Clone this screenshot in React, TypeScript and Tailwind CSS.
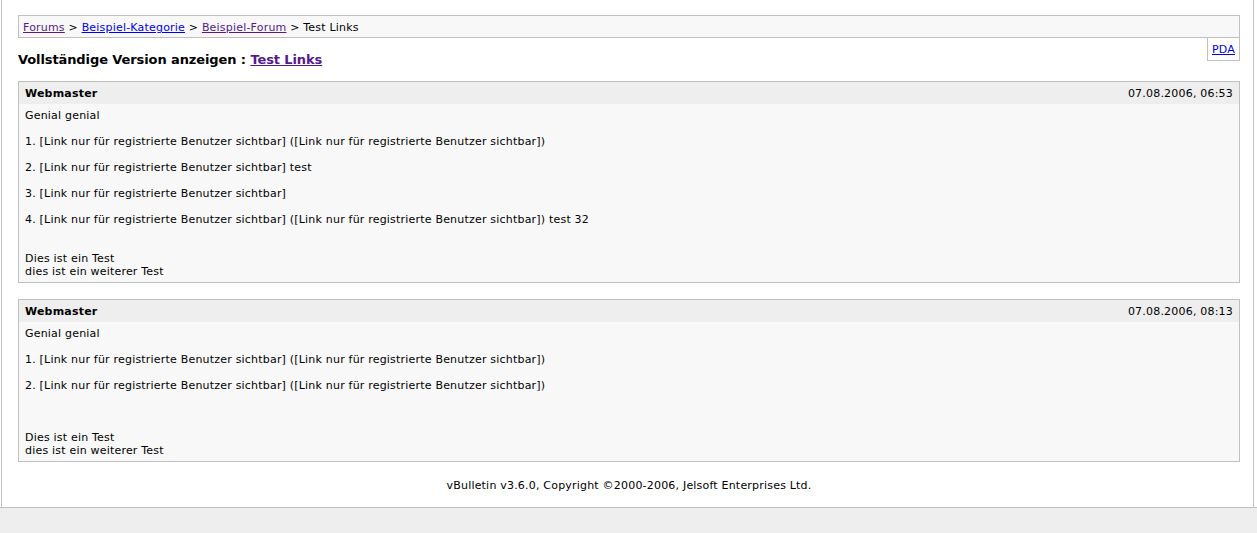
import React from "react";

interface Post {
  author: string;
  date: string;
  lines: string[];
}

const posts: Post[] = [
  {
    author: "Webmaster",
    date: "07.08.2006, 06:53",
    lines: [
      "Genial genial",
      "",
      "1. [Link nur für registrierte Benutzer sichtbar] ([Link nur für registrierte Benutzer sichtbar])",
      "",
      "2. [Link nur für registrierte Benutzer sichtbar] test",
      "",
      "3. [Link nur für registrierte Benutzer sichtbar]",
      "",
      "4. [Link nur für registrierte Benutzer sichtbar] ([Link nur für registrierte Benutzer sichtbar]) test 32",
      "",
      "",
      "Dies ist ein Test",
      "dies ist ein weiterer Test",
    ],
  },
  {
    author: "Webmaster",
    date: "07.08.2006, 08:13",
    lines: [
      "Genial genial",
      "",
      "1. [Link nur für registrierte Benutzer sichtbar] ([Link nur für registrierte Benutzer sichtbar])",
      "",
      "2. [Link nur für registrierte Benutzer sichtbar] ([Link nur für registrierte Benutzer sichtbar])",
      "",
      "",
      "",
      "Dies ist ein Test",
      "dies ist ein weiterer Test",
    ],
  },
];

const PostBox: React.FC<{ post: Post }> = ({ post }) => (
  <div className="border border-[#c0c0c0] bg-[#f8f8f8]">
    <div className="flex h-[22px] items-center justify-between bg-[#eeeeee] px-[6px] pt-px">
      <span className="font-bold">{post.author}</span>
      <span>{post.date}</span>
    </div>
    <div className="px-[6px] pt-[5px] pb-[4px]">
      {post.lines.map((l, i) => (
        <div key={i} className="h-[13px]">
          {l}
        </div>
      ))}
    </div>
  </div>
);

export default function App() {
  return (
    <div className="min-h-[533px] bg-[#eeeeee] text-[11px] leading-[13px] tracking-[0.2px] text-black [font-family:'DejaVu_Sans',Verdana,sans-serif]">
      <div className="border-b border-[#c0c0c0] bg-white pr-[3px]">
        <div className="ml-px border-l border-r border-[#c0c0c0] pl-[16px] pr-[13px] pt-[15px] pb-[15px]">
          <div className="border border-[#c0c0c0] bg-[#f8f8f8] px-[4px] pt-[5px] pb-[3px]">
            <a href="#" className="text-[#551a8b] underline">Forums</a>
            {" > "}
            <a href="#" className="text-[#0000ee] underline">Beispiel-Kategorie</a>
            {" > "}
            <a href="#" className="text-[#551a8b] underline">Beispiel-Forum</a>
            {" > Test Links"}
          </div>
          <div className="flex items-start justify-between">
            <div className="mt-[14px] text-[13px] leading-[16px] tracking-[-0.1px] font-bold">
              Vollständige Version anzeigen :{" "}
              <a href="#" className="text-[#551a8b] underline">Test Links</a>
            </div>
            <div className="h-[23px] border border-t-0 border-[#c0c0c0] px-[4px] pt-[5px]">
              <a href="#" className="text-[#0000ee] underline">PDA</a>
            </div>
          </div>
          <div className="mt-[13px] flex flex-col gap-[16px]">
            {posts.map((p, i) => (
              <PostBox key={i} post={p} />
            ))}
          </div>
          <div className="mt-[17px] text-center">
            vBulletin v3.6.0, Copyright ©2000-2006, Jelsoft Enterprises Ltd.
          </div>
        </div>
      </div>
    </div>
  );
}
